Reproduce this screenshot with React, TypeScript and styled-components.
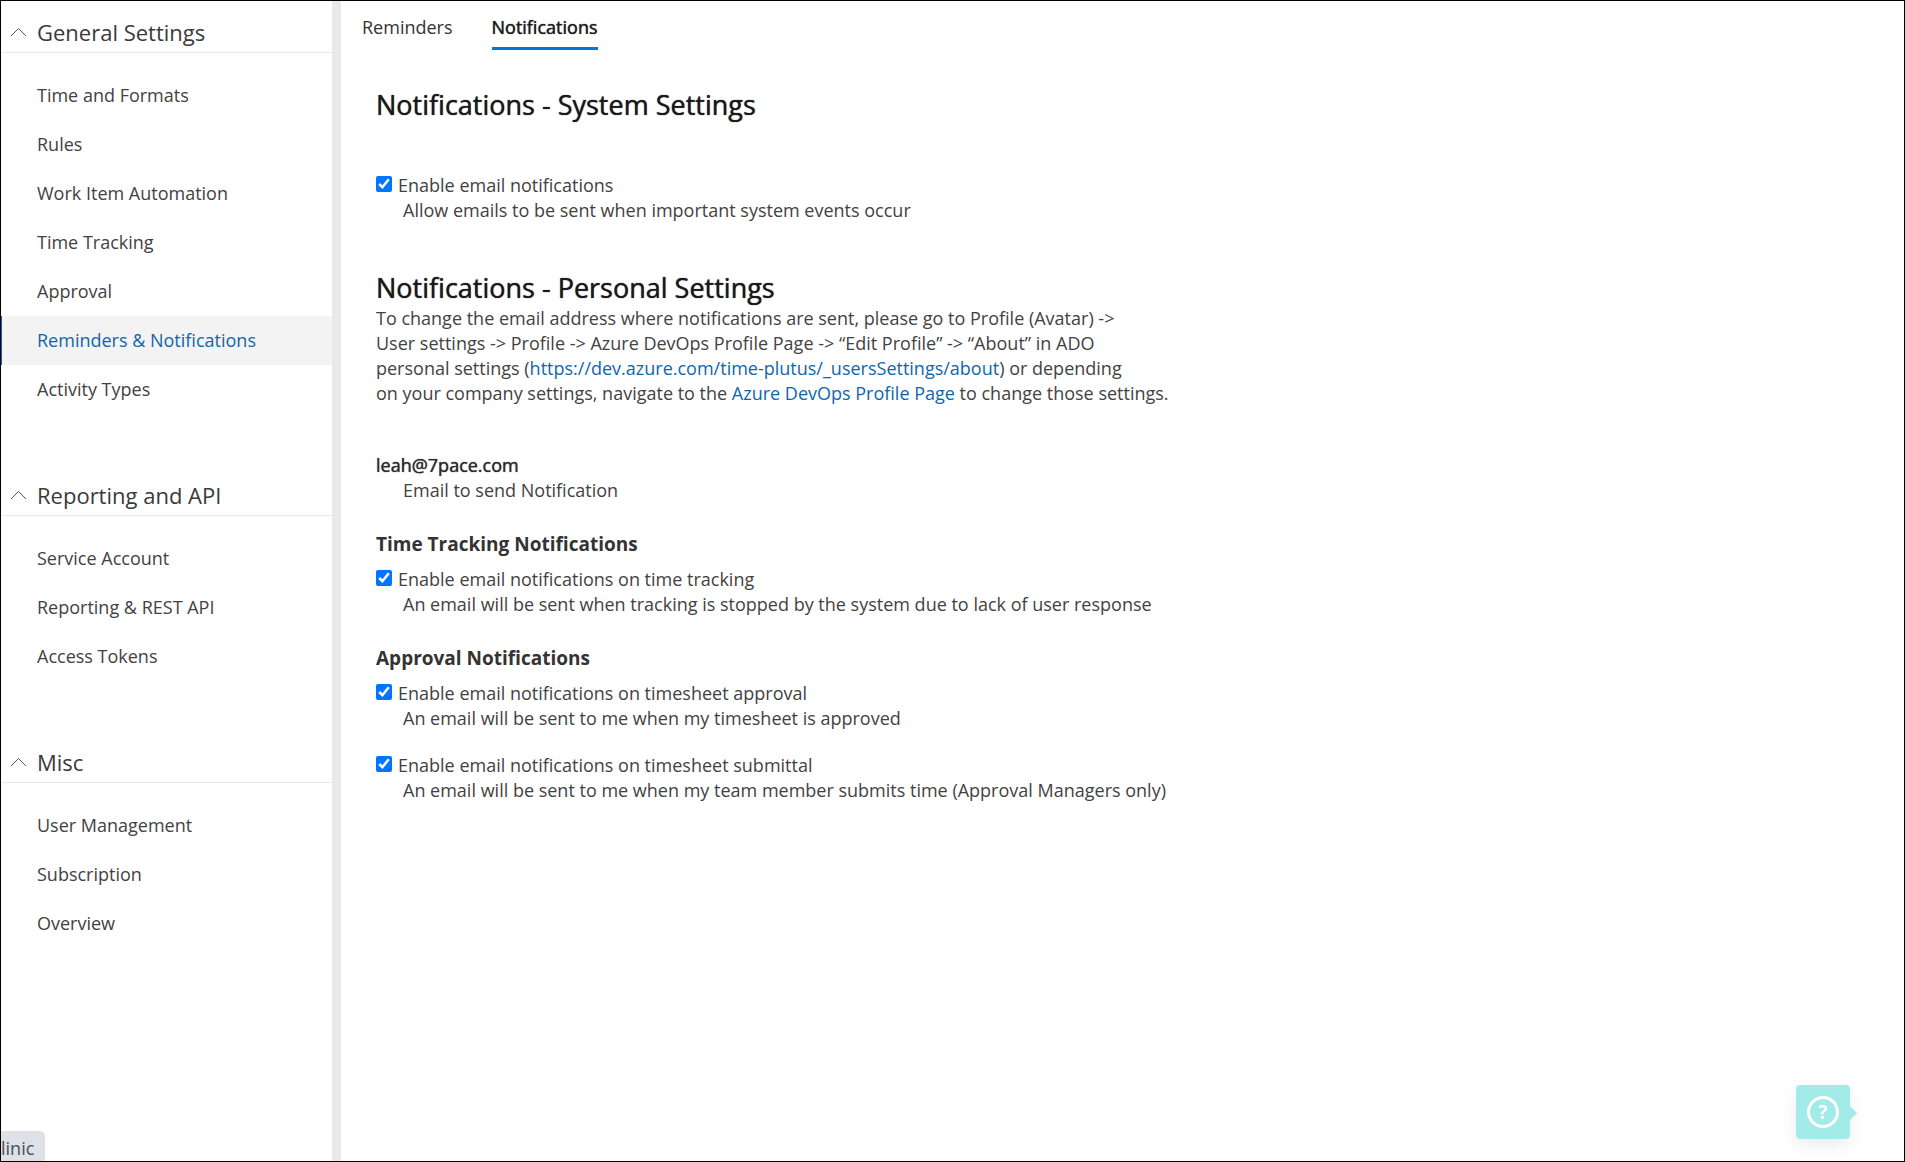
import React from "react";
import styled, { createGlobalStyle } from "styled-components";

const GlobalStyle = createGlobalStyle`
  *, *::before, *::after { box-sizing: border-box; }
  body {
    margin: 0;
    background: #fff;
    color: #424242;
    font-family: "Segoe UI", "Open Sans", "Noto Sans", sans-serif;
    font-size: 18px;
    line-height: 25px;
  }
`;

const Frame = styled.div`
  display: flex;
  min-height: 100vh;
  border: 1px solid #000;
`;

const Sidebar = styled.nav`
  flex: 0 0 340px;
  border-right: 9px solid #e9e9e9;
`;

const GroupHeader = styled.button`
  display: flex;
  align-items: center;
  gap: 10px;
  width: 100%;
  padding: 16px 9px 5px;
  border: 0;
  border-bottom: 1px solid #e9e9e9;
  background: none;
  color: #3a3a3a;
  font: inherit;
  font-size: 22px;
  line-height: 30px;
  text-align: left;
`;

const GroupList = styled.ul`
  margin: 0;
  padding: 18px 0 50px;
  list-style: none;
`;

const NavLink = styled.a<{ $active?: boolean }>`
  display: block;
  padding: 12px 35px;
  border-left: 1px solid ${(p) => (p.$active ? "#0067b8" : "transparent")};
  background: ${(p) => (p.$active ? "#f3f3f3" : "transparent")};
  color: ${(p) => (p.$active ? "#0f66ad" : "#424242")};
  text-decoration: none;
`;

const Main = styled.main`
  flex: 1;
  min-width: 0;
`;

const Tabs = styled.div`
  display: flex;
  gap: 39px;
  padding: 0 21px;
`;

const Tab = styled.button<{ $active?: boolean }>`
  padding: 14px 0 7px;
  border: 0;
  border-bottom: 3px solid ${(p) => (p.$active ? "#0078d4" : "transparent")};
  background: none;
  color: ${(p) => (p.$active ? "#1c1c1c" : "#333")};
  font: inherit;
  text-shadow: ${(p) => (p.$active ? "0 0 1px currentColor" : "none")};
`;

const Content = styled.div`
  padding: 37px 35px;
`;

const Title = styled.h2`
  margin: 0;
  color: #1a1a1a;
  font-size: 27px;
  font-weight: 500;
  line-height: 36px;
  text-shadow: 0 0 1px currentColor;
`;

const Section = styled.section`
  margin-bottom: 47px;
`;

const Paragraph = styled.p`
  margin: 0 0 47px;
`;

const Link = styled.a`
  color: #0f66ad;
  text-decoration: none;
`;

const SubTitle = styled.h3`
  margin: 29px 0 10px;
  color: #333;
  font-size: 19px;
  font-weight: 700;
  line-height: 25px;
`;

const Email = styled.div`
  color: #2b2b2b;
  text-shadow: 0 0 1px currentColor;
`;

const Note = styled.div`
  padding-left: 27px;
`;

const OptionBox = styled.div<{ $top?: number }>`
  margin-top: ${(p) => p.$top ?? 0}px;
`;

const OptionLabel = styled.label`
  display: flex;
  align-items: flex-start;
  gap: 6px;
`;

const Check = styled.input`
  width: 16px;
  height: 16px;
  margin: 3px 0 0;
  accent-color: #0075ff;
`;

const HelpButton = styled.button`
  position: fixed;
  right: 55px;
  bottom: 23px;
  display: grid;
  place-items: center;
  width: 54px;
  height: 54px;
  padding: 0;
  border: 0;
  border-radius: 4px;
  background: #a3ebe8;
  box-shadow: 0 6px 18px rgba(0, 0, 0, 0.08);

  &::after {
    content: "";
    position: absolute;
    left: 100%;
    top: 21px;
    border: 7px solid transparent;
    border-left-color: #a3ebe8;
    border-right-width: 0;
  }
`;

const HelpMark = styled.span`
  display: grid;
  place-items: center;
  width: 32px;
  height: 32px;
  border: 3px solid #fff;
  border-radius: 50%;
  color: #fff;
  font-family: "Open Sans", sans-serif;
  font-size: 19px;
  font-weight: 700;
  line-height: 24px;
`;

const StatusChip = styled.div`
  position: fixed;
  left: 1px;
  bottom: 1px;
  padding: 5px 11px 0 0;
  border-radius: 0 5px 0 0;
  background: #dee1e6;
  color: #4a4f5c;
`;

const Chevron = () => (
  <svg width="17" height="10" viewBox="0 0 17 10" fill="none" stroke="#555" aria-hidden="true">
    <path d="M1 9 8.500 1.500 16 9" />
  </svg>
);

const groups = [
  {
    title: "General Settings",
    items: [
      "Time and Formats",
      "Rules",
      "Work Item Automation",
      "Time Tracking",
      "Approval",
      "Reminders & Notifications",
      "Activity Types",
    ],
  },
  { title: "Reporting and API", items: ["Service Account", "Reporting & REST API", "Access Tokens"] },
  { title: "Misc", items: ["User Management", "Subscription", "Overview"] },
];

function Option({ id, label, note, top }: { id: string; label: string; note: string; top?: number }) {
  return (
    <OptionBox $top={top}>
      <OptionLabel htmlFor={id}>
        <Check id={id} type="checkbox" defaultChecked />
        {label}
      </OptionLabel>
      <Note>{note}</Note>
    </OptionBox>
  );
}

export default function App() {
  return (
    <>
      <GlobalStyle />
      <Frame>
        <Sidebar>
          {groups.map((group) => (
            <div key={group.title}>
              <GroupHeader type="button">
                <Chevron />
                {group.title}
              </GroupHeader>
              <GroupList>
                {group.items.map((item) => (
                  <li key={item}>
                    <NavLink href="#" $active={item === "Reminders & Notifications"}>
                      {item}
                    </NavLink>
                  </li>
                ))}
              </GroupList>
            </div>
          ))}
        </Sidebar>
        <Main>
          <Tabs>
            <Tab type="button">Reminders</Tab>
            <Tab type="button" $active>
              Notifications
            </Tab>
          </Tabs>
          <Content>
            <Section>
              <Title>Notifications - System Settings</Title>
              <Option
                id="system"
                top={50}
                label="Enable email notifications"
                note="Allow emails to be sent when important system events occur"
              />
            </Section>
            <Title>Notifications - Personal Settings</Title>
            <Paragraph>
              To change the email address where notifications are sent, please go to Profile (Avatar) -&gt;
              <br />
              User settings -&gt; Profile -&gt; Azure DevOps Profile Page -&gt; “Edit Profile” -&gt; “About” in ADO
              <br />
              personal settings (<Link href="#">https://dev.azure.com/time-plutus/_usersSettings/about</Link>) or
              depending
              <br />
              on your company settings, navigate to the <Link href="#">Azure DevOps Profile Page</Link> to change those
              settings.
            </Paragraph>
            <Email>leah@7pace.com</Email>
            <Note>Email to send Notification</Note>
            <SubTitle>Time Tracking Notifications</SubTitle>
            <Option
              id="tracking"
              label="Enable email notifications on time tracking"
              note="An email will be sent when tracking is stopped by the system due to lack of user response"
            />
            <SubTitle>Approval Notifications</SubTitle>
            <Option
              id="approval"
              label="Enable email notifications on timesheet approval"
              note="An email will be sent to me when my timesheet is approved"
            />
            <Option
              id="submittal"
              top={22}
              label="Enable email notifications on timesheet submittal"
              note="An email will be sent to me when my team member submits time (Approval Managers only)"
            />
          </Content>
        </Main>
      </Frame>
      <HelpButton type="button" aria-label="Help">
        <HelpMark>?</HelpMark>
      </HelpButton>
      <StatusChip>linic</StatusChip>
    </>
  );
}
